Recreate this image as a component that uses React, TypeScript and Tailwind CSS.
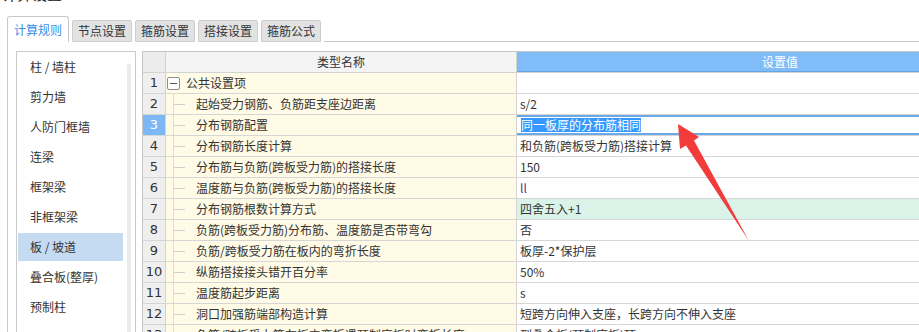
import { FC } from 'react'

type Row = {
  n: number
  name: string
  value: string
  group?: boolean
  selected?: boolean
  green?: boolean
  purple?: boolean
}

const tabs = ['计算规则', '节点设置', '箍筋设置', '搭接设置', '箍筋公式']

const categories = [
  '柱 / 墙柱',
  '剪力墙',
  '人防门框墙',
  '连梁',
  '框架梁',
  '非框架梁',
  '板 / 坡道',
  '叠合板(整厚)',
  '预制柱'
]

const rows: Row[] = [
  { n: 1, name: '公共设置项', value: '', group: true },
  { n: 2, name: '起始受力钢筋、负筋距支座边距离', value: 's/2' },
  { n: 3, name: '分布钢筋配置', value: '同一板厚的分布筋相同', selected: true },
  { n: 4, name: '分布钢筋长度计算', value: '和负筋(跨板受力筋)搭接计算' },
  { n: 5, name: '分布筋与负筋(跨板受力筋)的搭接长度', value: '150' },
  { n: 6, name: '温度筋与负筋(跨板受力筋)的搭接长度', value: 'll', purple: true },
  { n: 7, name: '分布钢筋根数计算方式', value: '四舍五入+1', green: true },
  { n: 8, name: '负筋(跨板受力筋)分布筋、温度筋是否带弯勾', value: '否' },
  { n: 9, name: '负筋/跨板受力筋在板内的弯折长度', value: '板厚-2*保护层' },
  { n: 10, name: '纵筋搭接接头错开百分率', value: '50%' },
  { n: 11, name: '温度筋起步距离', value: 's' },
  { n: 12, name: '洞口加强筋端部构造计算', value: '短跨方向伸入支座，长跨方向不伸入支座' },
  { n: 13, name: '负筋/跨板受力筋在板内弯折遇预制底板时弯折长度', value: '到叠合板(预制底板)顶' }
]

const font = { fontFamily: "'Microsoft YaHei', 'Noto Sans CJK SC', sans-serif" }

export default function App() {
  return (
    <div
      className="relative h-[332px] w-[919px] overflow-hidden bg-white text-[12px] text-[#333]"
      style={font}
    >
      {/* window title, mostly scrolled off */}
      <div className="h-[16px] overflow-hidden">
        <div className="-mt-[14px] pl-[2px] text-[15px] leading-[16px] text-[#222]">
          计算设置
        </div>
      </div>

      {/* Tabs */}
      <div className="flex h-[26px] items-end gap-[3px] pl-[7px]">
        {tabs.map((tab, i) =>
          i === 0 ? (
            <div
              key={tab}
              className="flex h-[26px] items-center rounded-t-[3px] border border-b-0 border-[#c8c8c8] bg-white px-[6px] text-[#3b8ee8]"
            >
              {tab}
            </div>
          ) : (
            <div
              key={tab}
              className="flex h-[22px] items-center rounded-t-[2px] border border-[#cdcdcd] bg-[#e2e2e2] px-[5px] text-[#333]"
            >
              {tab}
            </div>
          )
        )}
        <div className="flex-1 border-b border-[#c8c8c8]" />
      </div>

      {/* Content frame */}
      <div className="ml-[7px] flex h-[300px] border-l border-[#c8c8c8] pl-[8px] pt-[9px]">
        <TreePanel />
        <SettingsGrid />
      </div>

      {/* Annotation arrow */}
      <svg
        className="pointer-events-none absolute left-0 top-0"
        width={919}
        height={332}
      >
        <polygon
          points="678,124 699,137 694,140.5 749,241 686,145.5 680,149"
          fill="#f23c3c"
        />
      </svg>
    </div>
  )
}

const TreePanel: FC = () => (
  <div className="flex h-[300px] w-[120px] shrink-0 border border-[#cbcbcb] bg-white">
    <div className="w-[107px]">
      {categories.map(c => (
        <div key={c} className="h-[30px] px-[1px] py-[1px]">
          <div
            className={`flex h-[28px] items-center pl-[12px] ${
              c === '板 / 坡道' ? 'bg-[#c4dbf2]' : ''
            }`}
          >
            {c}
          </div>
        </div>
      ))}
    </div>
    <div className="ml-[3px] mt-[12px] w-[4px] rounded-full bg-[#ebebeb]" />
  </div>
)

const SettingsGrid: FC = () => (
  <div className="ml-[6px] flex w-[902px] shrink-0 flex-col border-l border-t border-[#c8c8c8]">
    {/* Header */}
    <div className="flex h-[21px] shrink-0 border-b border-[#d3d3d3]">
      <div className="w-[23px] shrink-0 border-r border-[#d3d3d3] bg-[#ececec]" />
      <div className="flex w-[351px] shrink-0 items-center justify-center border-r border-[#d3d3d3] bg-[#f4f4f4] text-[#333]">
        类型名称
      </div>
      <div className="flex w-[526px] shrink-0 items-center justify-center border-b border-[#64a3e4] bg-[#80bcf8] text-white">
        设置值
      </div>
    </div>

    {rows.map(r => (
      <div key={r.n} className="flex h-[21px] shrink-0 border-b border-[#d6d6d6]">
        <div
          className={`flex w-[23px] shrink-0 items-center justify-center border-r border-[#d3d3d3] text-[13px] ${
            r.selected ? 'bg-[#7db7f4] text-white' : 'bg-[#efefef] text-[#333]'
          }`}
          style={{ fontFamily: "'DejaVu Sans', sans-serif" }}
        >
          {r.n}
        </div>
        <div className="flex w-[351px] shrink-0 items-center border-r border-[#d3d3d3] bg-[#fffbe6]">
          {r.group ? (
            <>
              <span className="ml-[1px] flex h-[13px] w-[13px] items-center justify-center rounded-[2px] border border-[#8c8c8c] bg-white">
                <span className="h-px w-[7px] bg-[#555]" />
              </span>
              <span className="ml-[6px]">{r.name}</span>
            </>
          ) : (
            <div className="ml-[7px] flex h-full items-center border-l border-[#dcdcdc]">
              <span className="w-[11px] border-t border-[#cfcfcf]" />
              <span className="ml-[11px] whitespace-nowrap">{r.name}</span>
            </div>
          )}
        </div>
        <div
          className={`flex w-[526px] shrink-0 items-center pl-[3px] ${
            r.green ? 'bg-[#daf3e8]' : 'bg-white'
          } ${
            r.selected
              ? 'shadow-[inset_0_2px_0_#6aa8e8,inset_0_-2px_0_#6aa8e8]'
              : ''
          }`}
        >
          {r.selected ? (
            <span className="ml-[1px] bg-[#3399ff] leading-[14px] text-white">
              {r.value}
            </span>
          ) : (
            <span className={`whitespace-nowrap ${r.purple ? 'text-[#5a3588]' : ''}`}>
              {r.value}
            </span>
          )}
        </div>
      </div>
    ))}
  </div>
)
